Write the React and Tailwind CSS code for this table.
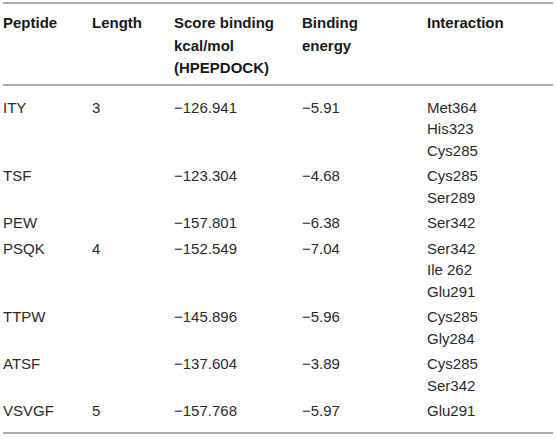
const rows = [
  { p: "ITY", l: "3", s: "−126.941", e: "−5.91", i: ["Met364", "His323", "Cys285"] },
  { p: "TSF", l: "", s: "−123.304", e: "−4.68", i: ["Cys285", "Ser289"] },
  { p: "PEW", l: "", s: "−157.801", e: "−6.38", i: ["Ser342"] },
  { p: "PSQK", l: "4", s: "−152.549", e: "−7.04", i: ["Ser342", "Ile 262", "Glu291"] },
  { p: "TTPW", l: "", s: "−145.896", e: "−5.96", i: ["Cys285", "Gly284"] },
  { p: "ATSF", l: "", s: "−137.604", e: "−3.89", i: ["Cys285", "Ser342"] },
  { p: "VSVGF", l: "5", s: "−157.768", e: "−5.97", i: ["Glu291"] },
];

const App = () => {
  return (
    <div className="w-[556px] h-[440px] bg-white pt-[2px] pl-[3px] font-['Liberation_Sans',Arial,sans-serif]">
      <table className="w-[550px] table-fixed border-collapse text-[15px] text-[#2b2b2b]">
        <colgroup>
          <col className="w-[89px]" />
          <col className="w-[82px]" />
          <col className="w-[128px]" />
          <col className="w-[125px]" />
          <col />
        </colgroup>
        <thead>
          <tr className="border-t-2 border-b-2 border-[#aaa] align-top text-left font-bold text-[#1a1a1a] leading-[22.5px]">
            <th className="pt-[8px] pb-[4px] font-bold">Peptide</th>
            <th className="pt-[8px] pb-[4px] font-bold">Length</th>
            <th className="pt-[8px] pb-[4px] font-bold">
              Score binding
              <br />
              kcal/mol
              <br />
              (HPEPDOCK)
            </th>
            <th className="pt-[8px] pb-[4px] font-bold">
              Binding
              <br />
              energy
            </th>
            <th className="pt-[8px] pb-[4px] font-bold">Interaction</th>
          </tr>
        </thead>
        <tbody className="border-b-2 border-[#aaa]">
          {rows.map((r, idx) => {
            const first = idx === 0;
            const last = idx === rows.length - 1;
            const pad = first ? "pt-[11px] pb-[2px]" : last ? "pt-[2px] pb-[10px]" : "pt-[2px] pb-[2px]";
            return (
              <tr key={r.p} className="align-top leading-[21.5px]">
                <td className={pad}>{r.p}</td>
                <td className={pad}>{r.l}</td>
                <td className={pad}>{r.s}</td>
                <td className={pad}>{r.e}</td>
                <td className={pad}>
                  {r.i.map((x) => (
                    <div key={x}>{x}</div>
                  ))}
                </td>
              </tr>
            );
          })}
        </tbody>
      </table>
    </div>
  );
};

export default App;
